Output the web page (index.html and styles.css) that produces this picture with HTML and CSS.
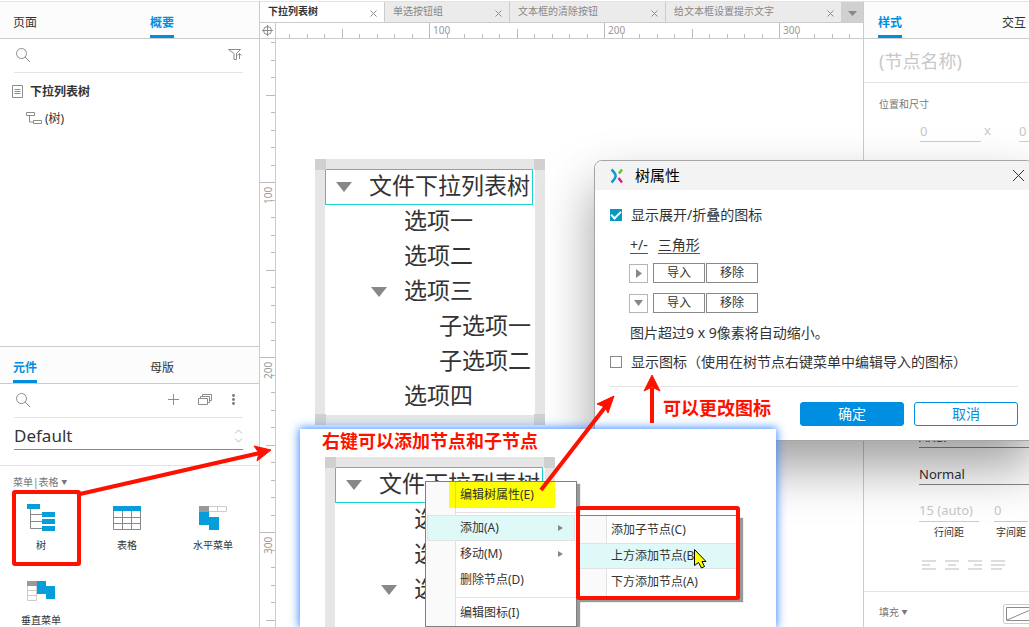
FILE: index.html
```html
<!DOCTYPE html>
<html lang="zh-CN">
<head>
<meta charset="utf-8">
<title>下拉列表树</title>
<link rel="stylesheet" href="styles.css">
</head>
<body>
<div class="app">
  <aside class="side">
    <section class="outline">
      <nav class="tabs">
        <button class="tab">页面</button>
        <button class="tab active">概要</button>
      </nav>
      <div class="tools">
        <svg class="search-icon" width="14" height="14" viewBox="0 0 14 14"><circle cx="5.5" cy="5.5" r="5" /><path d="M9 9l5 5" /></svg>
        <svg class="filter-icon" width="15" height="13" viewBox="0 0 15 13"><path d="M.5 1.500h12L8.500 5.500v6h-2.500v-6zM11.500 11V5.500M9.500 7.500l2-2 2 2" /></svg>
      </div>
      <ul class="pages">
        <li class="page"><svg width="11" height="13" viewBox="0 0 11 13"><path d="M.5.5h10v12H.5zM2.500 4.500h6M2.500 6.500h6M2.500 8.500h6" /></svg><b>下拉列表树</b></li>
        <li class="page child"><svg width="16" height="13" viewBox="0 0 16 13"><path d="M.5.5h8v3h-8zM7.500 8.500h8v3h-8zM3.500 4v6h4" /></svg><span>(树)</span></li>
      </ul>
    </section>
    <section class="library">
      <nav class="tabs">
        <button class="tab active">元件</button>
        <button class="tab">母版</button>
      </nav>
      <div class="tools">
        <svg class="search-icon" width="14" height="14" viewBox="0 0 14 14"><circle cx="5.500" cy="5.500" r="5" /><path d="M9 9l5 5" /></svg>
        <div class="tool-group">
          <svg width="11" height="11" viewBox="0 0 11 11"><path d="M0 5.500h11M5.500 0v11" /></svg>
          <svg width="15" height="12" viewBox="0 0 15 12"><path d="M.5 4.500h9v6h-9zM2.500 4V2.500h9v6H10M4.500 2V.5h9v6H12" /></svg>
          <svg class="dots" width="3" height="11" viewBox="0 0 3 11"><circle cx="1.500" cy="1.500" r="1.400" /><circle cx="1.500" cy="5.500" r="1.400" /><circle cx="1.500" cy="9.500" r="1.400" /></svg>
        </div>
      </div>
      <div class="lib-pick">
        <select class="lib-select" aria-label="元件库"><option>Default</option></select>
        <svg width="9" height="14" viewBox="0 0 9 14"><path d="M1 4.500L4.500 1 8 4.500M1 9.500L4.500 13 8 9.500" /></svg>
      </div>
      <h2 class="group">菜单|表格 <small>▼</small></h2>
      <div class="widgets">
        <button class="widget">
          <svg width="28" height="28" viewBox="0 0 28 28"><path class="line" d="M3.500 6v19.500H15M3.500 11.500H15M3.500 18.500H15" /><path class="blue" d="M0 1h13v5H0zM15 9h13v5H15zM15 16h13v5H15zM15 23h13v5H15z" /></svg>树</button>
        <button class="widget">
          <svg width="28" height="28" viewBox="0 0 28 28"><path class="blue" d="M0 3h28v5H0z" /><path class="line" d="M.5 8v18.500h27V8M.5 14.500h27M.5 20.500h27M9.500 8v18.500M18.500 8v18.500" /></svg>表格</button>
        <button class="widget">
          <svg width="28" height="28" viewBox="0 0 28 28"><path class="pale" d="M10 3.500h17.500v5H10M18.500 3.500v5" /><path class="gray" d="M0 3h10v6H0z" /><path class="blue" d="M0 9h10v5h10v13H10v-5H0z" /></svg>水平菜单</button>
        <button class="widget">
          <svg width="28" height="28" viewBox="0 0 28 28"><path class="pale" d="M.5 8v14.500h9V8M.5 12.500h9M.5 17.500h9" /><path class="gray" d="M0 3h10v5H0z" /><path class="blue" d="M10 3h9v5h9v13h-9v-5h-9z" /></svg>垂直菜单</button>
      </div>
    </section>
  </aside>

  <main class="editor">
    <nav class="files">
      <button class="file on">下拉列表树<svg width="7" height="7" viewBox="0 0 7 7"><path d="M.5.5l6 6M6.500.5l-6 6" /></svg></button>
      <button class="file">单选按钮组<svg width="7" height="7" viewBox="0 0 7 7"><path d="M.5.5l6 6M6.500.5l-6 6" /></svg></button>
      <button class="file wide">文本框的清除按钮<svg width="7" height="7" viewBox="0 0 7 7"><path d="M.5.5l6 6M6.500.5l-6 6" /></svg></button>
      <button class="file last">给文本框设置提示文字<svg width="7" height="7" viewBox="0 0 7 7"><path d="M.5.5l6 6M6.500.5l-6 6" /></svg></button>
      <button class="more" aria-label="更多"><svg width="9" height="5" viewBox="0 0 9 5"><path d="M0 0h9L4.500 5z" /></svg></button>
    </nav>
    <div class="corner"><svg width="11" height="11" viewBox="0 0 11 11"><circle cx="5.500" cy="5.500" r="4" /><path d="M5.500 0v11M0 5.500h11" /></svg></div>
    <svg class="ruler-x" width="100%" height="15">
      <defs><pattern id="tx" x="153" y="0" width="175" height="15" patternUnits="userSpaceOnUse"><path d="M.5 0v15M18.500 11v4M35.500 11v4M53.500 11v4M70.500 11v4M88.500 6v9M105.500 11v4M123.500 11v4M140.500 11v4M158.500 11v4" /></pattern></defs>
      <rect width="100%" height="15" fill="url(#tx)" stroke="none" />
      <text x="157" y="11">100</text><text x="332" y="11">200</text><text x="507" y="11">300</text>
    </svg>
    <svg class="ruler-y" width="15" height="100%">
      <defs><pattern id="ty" x="0" y="143" width="15" height="175" patternUnits="userSpaceOnUse"><path d="M0 .5h15M11 18.500h4M11 35.500h4M11 53.500h4M11 70.500h4M6 88.500h9M11 105.500h4M11 123.500h4M11 140.500h4M11 158.500h4" /></pattern></defs>
      <rect width="15" height="100%" fill="url(#ty)" stroke="none" />
      <text transform="translate(12 165) rotate(-90)">100</text><text transform="translate(12 340) rotate(-90)">200</text><text transform="translate(12 515) rotate(-90)">300</text>
    </svg>
    <div class="canvas">
      <div class="frame first">
        <ul class="tree">
          <li><div class="node root"><i class="tri"></i>文件下拉列表树</div>
            <ul>
              <li><div class="node">选项一</div></li>
              <li><div class="node">选项二</div></li>
              <li><div class="node"><i class="tri"></i>选项三</div>
                <ul><li><div class="node">子选项一</div></li><li><div class="node">子选项二</div></li></ul></li>
              <li><div class="node">选项四</div></li>
            </ul></li>
        </ul>
        <i class="grip tl"></i><i class="grip tr"></i><i class="grip bl"></i><i class="grip br"></i>
      </div>
    </div>
  </main>

  <aside class="props">
    <nav class="tabs">
      <button class="tab active">样式</button>
      <button class="tab">交互</button>
    </nav>
    <input class="name" placeholder="(节点名称)" aria-label="节点名称">
    <section class="size">
      <h2 class="group">位置和尺寸</h2>
      <div class="size-row"><input value="0" aria-label="宽"><span>x</span><input value="0" aria-label="高"></div>
    </section>
    <section class="type">
      <select class="type-select" aria-label="字体"><option>Arial</option></select>
      <select class="type-select" aria-label="字形"><option>Normal</option></select>
      <div class="spacing">
        <label><input value="15 (auto)">行间距</label>
        <label><input value="0">字间距</label>
      </div>
      <div class="aligns">
        <svg width="14" height="10" viewBox="0 0 14 10"><path d="M0 1h14M0 5h8M0 9h14" /></svg>
        <svg width="14" height="10" viewBox="0 0 14 10"><path d="M0 1h14M3 5h8M0 9h14" /></svg>
        <svg width="14" height="10" viewBox="0 0 14 10"><path d="M0 1h14M6 5h8M0 9h14" /></svg>
        <svg width="14" height="10" viewBox="0 0 14 10"><path d="M0 1h14M0 5h14M0 9h11" /></svg>
      </div>
    </section>
    <section class="fill">
      <h2 class="group">填充 <small>▼</small></h2>
      <button class="swatch" aria-label="填充颜色"><svg width="30" height="14" viewBox="0 0 30 14"><path d="M.5.5h29v13H.5zM1 13L29 1" /></svg></button>
    </section>
  </aside>
</div>

<div class="dialog" role="dialog" aria-label="树属性">
  <header class="dialog-head">
    <svg width="14" height="16" viewBox="0 0 14 16"><path d="M1.500 1.500C7 7 7 9 1.500 14.500" stroke="#0a9bd8" /><path d="M12 1.500L9 5.500" stroke="#6cbb3c" /><path d="M8.500 10l3.500 4.500" stroke="#e3178a" /></svg>
    <h1>树属性</h1>
    <button class="close" aria-label="关闭"><svg width="11" height="11" viewBox="0 0 11 11"><path d="M0 0l11 11M11 0L0 11" /></svg></button>
  </header>
  <div class="dialog-body">
    <label class="check"><input type="checkbox" checked>显示展开/折叠的图标</label>
    <div class="links"><a href="#">+/-</a><a href="#">三角形</a></div>
    <div class="icon-row"><span class="thumb"><svg width="6" height="9" viewBox="0 0 6 9"><path d="M0 0l6 4.500L0 9z" /></svg></span><button>导入</button><button>移除</button></div>
    <div class="icon-row"><span class="thumb"><svg width="9" height="6" viewBox="0 0 9 6"><path d="M0 0h9L4.500 6z" /></svg></span><button>导入</button><button>移除</button></div>
    <p>图片超过9 x 9像素将自动缩小。</p>
    <label class="check"><input type="checkbox">显示图标（使用在树节点右键菜单中编辑导入的图标）</label>
    <footer class="dialog-foot">
      <button class="ok">确定</button>
      <button class="cancel">取消</button>
    </footer>
  </div>
</div>

<div class="inset">
  <h2 class="note">右键可以添加节点和子节点</h2>
  <div class="frame">
    <ul class="tree">
      <li><div class="node root"><i class="tri"></i>文件下拉列表树</div>
        <ul>
          <li><div class="node">选项一</div></li>
          <li><div class="node">选项二</div></li>
          <li><div class="node"><i class="tri"></i>选项三</div></li>
        </ul></li>
    </ul>
    <i class="grip tl"></i><i class="grip tr"></i>
  </div>
</div>

<div class="menu main-menu">
  <button class="item marked">编辑树属性(E)</button>
  <hr>
  <button class="item hot">添加(A)<i></i></button>
  <button class="item">移动(M)<i></i></button>
  <button class="item">删除节点(D)</button>
  <hr>
  <button class="item">编辑图标(I)</button>
</div>
<div class="menu sub-menu">
  <button class="item">添加子节点(C)</button>
  <button class="item hot">上方添加节点(B)</button>
  <button class="item">下方添加节点(A)</button>
</div>

<h2 class="note change">可以更改图标</h2>
<svg class="marks" width="1029" height="627" viewBox="0 0 1029 627">
  <rect x="14" y="492" width="65" height="72" rx="1" />
  <rect x="578" y="508" width="160" height="90" rx="1" />
  <path d="M80 494L260 453M541 490L606 406M652 423V388" />
  <path class="tip" d="M271 450L254 446 259 453 257 461ZM614 396L597 404 605 407 608 413ZM652 375L644 391 652 387 660 391Z" />
  <path class="pointer" d="M694.500 549.500v16l4-3 3 5.500 3-1.500-2.500-5h4z" />
</svg>
</body>
</html>
```

FILE: styles.css
```css
* { box-sizing: border-box; }
body {
  margin: 0;
  height: 100vh;
  overflow: hidden;
  position: relative;
  background: #fff;
  color: #333;
  font: 12px/16px "Noto Sans", "Noto Sans CJK SC", sans-serif;
}
button, input, select { font: inherit; color: inherit; background: none; border: 0; border-radius: 0; padding: 0; margin: 0; outline: 0; }
select { appearance: none; }
h1, h2, p, ul { margin: 0; padding: 0; font-weight: normal; }
ul { list-style: none; }
svg { display: block; flex: none; fill: none; stroke: #8c8c8c; }

.app {
  height: 100vh;
  display: grid;
  grid-template-columns: 260px minmax(0, 1fr) 166px;
  padding-top: 1px;
}
.side { display: flex; flex-direction: column; border-right: 1px solid #ccc; min-height: 0; }
.outline { border-top: 1px solid #e4e4e4; flex: none; height: 345px; }
.library { border-top: 1px solid #ccc; min-height: 0; flex: 1; }
.tabs { display: grid; grid-template-columns: 137px auto; height: 37px; padding-left: 13px; background: #fcfcfc; border-bottom: 1px solid #ccc; justify-content: start; }
.tab { justify-self: start; padding-top: 8px; border-bottom: 3px solid transparent; }
.tab.active { color: #008fe0; font-weight: bold; border-color: #008fe0; }
.tools { display: flex; align-items: center; justify-content: space-between; height: 34px; margin: 0 16px 0 14px; padding: 0 0 2px 2px; border-bottom: 1px solid #e4e4e4; }
.tool-group { display: flex; align-items: center; gap: 19px; padding-right: 8px; }
.dots { fill: #777; stroke: none; }
.pages { padding: 5px 12px; }
.page { display: flex; align-items: center; gap: 7px; height: 27px; }
.page.child { padding-left: 14px; gap: 3px; }
.lib-pick { display: flex; align-items: center; justify-content: space-between; height: 32px; margin: 0 16px 15px 14px; padding-top: 4px; border-bottom: 1px solid #888; }
.lib-pick svg { stroke: #bbb; }
.lib-select { font-size: 17px; flex: 1; height: 26px; }
.group { font-size: 10px; color: #777; }
.group small { font-size: 6px; vertical-align: 2px; }
.library .group { border-top: 1px solid #e4e4e4; padding: 8px 13px 0; height: 32px; }
.widgets { display: grid; grid-template-columns: repeat(3, 86px); grid-auto-rows: 75px; margin-top: 6px; margin-left: -2px; }
.widget { display: flex; flex-direction: column; align-items: center; gap: 6px; font-size: 10px; }
.widget .line { stroke: #888; }
.widget .pale { stroke: #ccc; }
.widget .gray { fill: #999; stroke: none; }
.widget .blue { fill: #069ddb; stroke: none; }

.editor { display: grid; grid-template: 22px 16px minmax(0, 1fr) / 16px minmax(0, 1fr); min-height: 0; }
.files { grid-column: 1 / -1; display: flex; border-top: 1px solid #e4e4e4; border-bottom: 1px solid #ccc; background: #ebebeb; font-size: 10px; }
.file { flex: 0 1 125px; display: flex; align-items: center; justify-content: space-between; padding: 0 7px 2px 8px; color: #888; border-right: 1px solid #ccc; }
.file svg { margin-top: 4px; }
.file.wide { flex-basis: 156px; }
.file.last { flex: 1 1 175px; border: 0; }
.file.on { background: #fff; color: #333; font-weight: bold; }
.more { width: 22px; background: #d0d0d0; display: grid; place-items: center; padding-top: 3px; }
.more svg { fill: #888; stroke: none; }
.corner { display: grid; place-items: center; border-right: 1px solid #ccc; border-bottom: 1px solid #ccc; }
.ruler-x, .ruler-y { stroke: #bbb; }
.ruler-x { border-bottom: 1px solid #ccc; height: 16px; }
.ruler-y { border-right: 1px solid #ccc; width: 16px; }
.ruler-x text, .ruler-y text { fill: #999; stroke: none; font-size: 10px; }
.canvas { position: relative; }

.frame { width: 230px; border: 10px solid #e6e6e6; background: #fff; position: relative; }
.frame.first { position: absolute; left: 39px; top: 120px; height: 266px; }
.tree { font-size: 23px; line-height: 33px; white-space: nowrap; }
.tree ul { padding-left: 35px; }
.node { height: 35px; padding: 0 0 2px 44px; position: relative; }
.node .tri { position: absolute; left: 11px; top: 13px; border: 8px solid transparent; border-top: 10px solid #888; border-bottom: 0; }
.node.root::before { content: ""; position: absolute; inset: 0 2px -1px 0; border: 1px solid #1dd2d2; }
.grip { position: absolute; width: 11px; height: 11px; background: #d0d0d0; }
.tl { left: -10px; top: -10px; }
.tr { right: -10px; top: -10px; }
.bl { left: -10px; bottom: -10px; }
.br { right: -10px; bottom: -10px; }

.props { border-left: 1px solid #ccc; display: flex; flex-direction: column; min-width: 0; min-height: 0; overflow: hidden; white-space: nowrap; }
.props .tabs { flex: none; height: 38px; border-top: 1px solid #e4e4e4; padding-left: 14px; grid-template-columns: 124px auto; }
.name { height: 44px; flex: none; padding-left: 15px; font-size: 18px; border-bottom: 1px solid #e4e4e4; width: 100%; }
.name::placeholder { color: #c8c8c8; }
.size { padding: 13px 0 0 15px; flex: 1; }
.size-row { display: flex; gap: 3px; margin-left: 41px; padding-top: 8px; color: #c8c8c8; font-size: 13px; }
.size-row input { width: 61px; flex: none; height: 22px; border-bottom: 1px solid #ccc; }
.size-row span { flex: none; width: 32px; padding-top: 2px; }
.type { padding-left: 55px; }
.type-select { display: block; width: 120px; height: 37px; padding-top: 15px; font-size: 13px; border-bottom: 1px solid #888; }
.spacing { display: grid; grid-template-columns: 60px 34px; gap: 15px; padding-top: 14px; font-size: 10px; }
.spacing label { display: flex; flex-direction: column; align-items: center; gap: 2px; }
.spacing input { width: 100%; height: 23px; font-size: 13px; color: #c8c8c8; border-bottom: 1px solid #ccc; }
.aligns { display: flex; gap: 9px; padding: 20px 3px 21px; }
.aligns svg { stroke: #ddd; stroke-width: 2; }
.fill { flex: none; display: flex; justify-content: space-between; border-top: 1px solid #e4e4e4; padding: 12px 0 0 15px; height: 36px; }
.swatch { width: 36px; height: 20px; border: 1px solid #ccc; border-radius: 2px; padding: 2px; margin-right: -10px; flex: none; }

.dialog { position: absolute; left: 594px; right: -5px; top: 160px; background: #fff; border: 1px solid #a5a5a5; border-radius: 8px 8px 0 0; box-shadow: 0 26px 52px rgba(0, 0, 0, .38); font-size: 14px; }
.dialog-head { display: flex; align-items: center; gap: 11px; height: 29px; padding: 0 9px 0 15px; background: #f3f3f3; border-radius: 8px 8px 0 0; }
.dialog-head > svg { stroke-width: 2.500; }
.dialog-head h1 { flex: 1; font-size: 15px; color: #000; padding-bottom: 2px; }
.close svg { stroke: #333; }
.dialog-body { padding: 14px 15px 14px; }
.check { display: flex; align-items: center; gap: 9px; height: 22px; }
.check input { appearance: none; width: 12px; height: 12px; border: 1px solid #888; display: grid; place-items: center; }
.check input:checked { background: #0797c3; border-color: #0797c3; }
.check input:checked::after { content: ""; width: 8px; height: 4px; border: solid #fff; border-width: 0 0 2px 2px; transform: translateY(-1px) rotate(-45deg); }
.links { display: flex; gap: 10px; padding: 11px 20px 4px; height: 32px; }
.links a { color: #333; height: 17px; text-decoration: none; border-bottom: 1px solid #555; }
.icon-row { display: flex; align-items: center; gap: 1px; height: 30px; padding-left: 19px; }
.icon-row button { width: 52px; height: 20px; border: 1px solid #888; font-size: 12px; }
.thumb { width: 19px; height: 19px; margin-right: 4px; border: 1px solid #b5b5b5; display: grid; place-items: center; }
.thumb svg { fill: #888; stroke: none; }
.dialog-body p { padding: 7px 20px 10px; }
.dialog-foot { display: flex; justify-content: flex-end; gap: 10px; margin-top: 13px; padding-top: 15px; border-top: 1px solid #e4e4e4; }
.dialog-foot button { width: 104px; height: 24px; border: 1px solid #008fe0; border-radius: 3px; }
.ok { background: #008fe0; color: #fff; }
.cancel { color: #008fe0; }

.inset { position: absolute; left: 300px; top: 429px; bottom: 0; width: 476px; background: #fff; box-shadow: 0 0 9px 1px #3d8bff; padding-left: 25px; overflow: visible; }
.inset .frame { height: 200px; }
.note { color: #f10; font-size: 18px; line-height: 24px; font-weight: bold; white-space: nowrap; }
.inset .note { margin: 0 0 4px -3px; }
.note.change { position: absolute; left: 663px; top: 396px; }

.menu { position: absolute; background: linear-gradient(90deg, #fafafa 29px, #e2e2e2 29px, #e2e2e2 30px, #fff 30px); border: 1px solid #808080; box-shadow: 3px 3px 1px #999; display: flex; flex-direction: column; }
.main-menu { left: 425px; top: 481px; width: 152px; height: 146px; padding: 0 1px; }
.sub-menu { left: 576px; top: 515px; width: 164px; height: 84px; padding: 1px; }
.item { flex: none; height: 26px; padding: 0 11px 0 32px; display: flex; align-items: center; justify-content: space-between; border: 1px solid transparent; }
.item.hot { background: #dff8f8; border-color: #e2e2e2; }
.item i { border: 3px solid transparent; border-left: 5px solid #888; border-right: 0; }
.item.marked { height: 26px; margin: 0 20px 0 22px; padding-left: 11px; background: linear-gradient(90deg, #ff0 6px, #e4e400 6px, #e4e400 7px, #ff0 7px); border: 0; }
.menu hr { width: 121px; margin: 4px 0 2px 28px; border: 0; border-top: 1px solid #e2e2e2; flex: none; }
.marks { position: absolute; left: 0; top: 0; stroke: #f10; stroke-width: 4; pointer-events: none; }
.marks .tip { fill: #f10; stroke-width: 1; }
.marks .pointer { fill: #ff0; stroke: #000; stroke-width: 1; }
```
